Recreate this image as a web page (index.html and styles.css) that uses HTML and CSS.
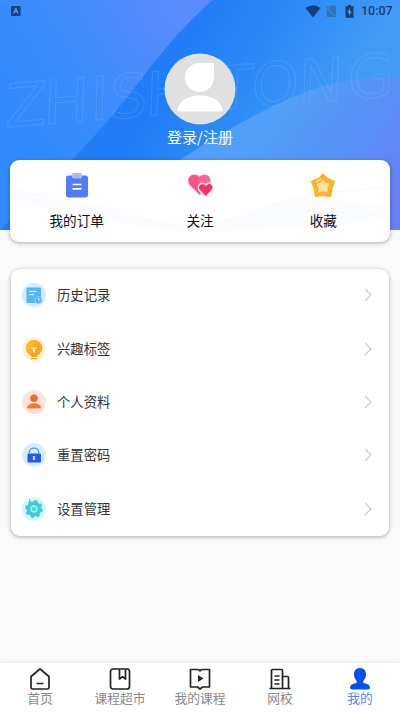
FILE: index.html
```html
<!DOCTYPE html>
<html lang="zh-CN">
<head>
<meta charset="utf-8">
<title>我的</title>
<link rel="stylesheet" href="styles.css">
</head>
<body>
<div class="app">
  <header class="hero">
    <svg class="hero-bg" viewBox="0 0 400 230" aria-hidden="true">
      <defs>
        <linearGradient id="base" gradientUnits="userSpaceOnUse" x1="190" y1="40" x2="330" y2="120">
          <stop offset="0" stop-color="#207df7"/><stop offset=".45" stop-color="#2c8bf7"/><stop offset="1" stop-color="#409bf5"/>
        </linearGradient>
        <linearGradient id="left" gradientUnits="userSpaceOnUse" x1="20" y1="110" x2="180" y2="10">
          <stop offset="0" stop-color="#318bfe"/><stop offset=".45" stop-color="#3f8bfd"/><stop offset="1" stop-color="#598bfb"/>
        </linearGradient>
        <linearGradient id="right" gradientUnits="userSpaceOnUse" x1="280" y1="105" x2="400" y2="190">
          <stop offset="0" stop-color="#519ff8"/><stop offset=".5" stop-color="#5592f7"/><stop offset="1" stop-color="#6a7ff5"/>
        </linearGradient>
      </defs>
      <rect width="400" height="230" fill="url(#base)"/>
      <path d="M0 0H213Q181 27 145 74Q112 119 70 162Q38 195 0 230Z" fill="url(#left)"/>
      <path d="M160 173Q250 112 311 90Q350 76 400 76V230H100Z" fill="url(#right)"/>
      <text class="hero-word" transform="translate(0 128) skewY(-4.7) skewX(-2)" x="5 43 90 109 145 191 215 251 298 347">ZHISHITONG</text>
    </svg>
    <div class="status">
      <svg width="12" height="12" viewBox="0 0 12 12"><rect x="1" y="1" width="9.6" height="10" rx="1" fill="#164480"/><path d="M3.7 8.5 5.8 3.2 7.9 8.5M4.5 6.8H7.1" fill="none" stroke="#79aee6"/></svg>
      <div class="status-right">
        <svg width="16" height="13" viewBox="0 0 16 13"><path d="M.5 3.1Q8-2.400 15.500 3.100L8 12.500Z" fill="#153f73"/></svg>
        <svg width="11" height="13" viewBox="0 0 11 13"><path d="M4 .5H10V11L2 3ZM1 4 9 12H1Z" fill="#3470b4"/><path d="M0 1 10 12" stroke="#3470b4"/></svg>
        <svg width="9" height="13" viewBox="0 0 9 13"><path d="M3 0H6V1.3H8.5V12.7H.5V1.3H3Z" fill="#153f73"/><path d="M5 3 2.5 7.5H4.2V11L6.7 6.4H5Z" fill="#5eaaf0"/></svg>
        <span class="clock">10:07</span>
      </div>
    </div>
    <div class="profile">
      <svg class="avatar" viewBox="0 0 72 72"><circle cx="36" cy="36" r="35.5" fill="#e0e0e0"/><path d="M36 10H50V24A14.500 14.500 0 1 1 36 10Z" fill="#fff"/><path d="M13.500 58.500C13.500 48 24 42.500 36 42.500S58.500 48 58.500 58.500Z" fill="#fff"/></svg>
      <a class="login">登录/注册</a>
    </div>
  </header>

  <section class="card quick">
    <svg class="waves" viewBox="0 0 380 82" preserveAspectRatio="none"><path d="M0 30Q60 40 110 53T190 66Q224 61 247 49Q305 32 380 48V58Q300 70 170 72Q95 62 0 40Z" fill="#fafcff"/><path d="M0 30Q80 42 115 54T190 58M160 66Q215 66 247 50Q300 30 380 28M280 50Q330 50 380 58" fill="none" stroke="#f4f8fd"/></svg>
    <a class="quick-item">
      <svg width="30" height="30" viewBox="0 0 30 30"><rect x="4" y="5.500" width="22" height="22" rx="2.500" fill="#527bf7"/><rect x="10" y="3" width="10" height="5.500" rx="1.800" fill="#a6b9fc"/><path d="M10.500 14.500H19.500M10.500 18.800H19.500" stroke="#fff" stroke-width="1.700"/></svg>
      <span>我的订单</span>
    </a>
    <a class="quick-item">
      <svg width="30" height="30" viewBox="0 0 30 30"><defs><linearGradient id="heart" x2="1"><stop stop-color="#ff4c7d"/><stop offset="1" stop-color="#ff6b9c"/></linearGradient></defs><path d="M14.500 25 5 15.300C-.5 8.500 8 .5 14.500 6.800C21 .5 29 8.500 24 15.300Z" fill="url(#heart)"/><path d="M20.800 27 14.500 20.500C11 15.500 17 10.800 20.800 15C24.500 10.800 31 15.500 27 20.500Z" fill="#fb3468" stroke="#fff" stroke-width="1.300"/></svg>
      <span>关注</span>
    </a>
    <a class="quick-item">
      <svg width="30" height="30" viewBox="0 0 30 30"><path d="M15 5 18.800 9.200 25.500 12 23 18 22 25.500 15 24.500 8 25.500 7 18 4.500 12 11.200 9.200Z" fill="#fbb32d" stroke="#fbb32d" stroke-width="3" stroke-linejoin="round"/><path d="M15 10.500 17.200 13.500 20.700 14.500 18.800 17.700 18.700 21.500 15 20.500 11.300 21.500 11.200 17.700 9.300 14.500 12.800 13.500Z" fill="#ffe2a0" stroke="#ffe2a0" stroke-width="1.500" stroke-linejoin="round"/><path d="M8 12 13 9" stroke="#ffdb82" stroke-width="1.500"/></svg>
      <span>收藏</span>
    </a>
  </section>

  <nav class="card menu">
    <a class="row">
      <svg class="row-icon" viewBox="0 0 24 24"><circle cx="12" cy="12" r="12" fill="#d2edff"/><rect x="4.500" y="4.500" width="14.500" height="15.500" rx="1" fill="#53b6fa"/><path d="M7 8.300H15M7 11.500H12" stroke="#c9edff" stroke-width="1.300"/><circle cx="16.500" cy="17" r="3.500" fill="#55aff2" stroke="#8fcffb"/><path d="M16.500 15V17H18.200" fill="none" stroke="#e8f8ff"/></svg>
      <span class="label">历史记录</span><svg class="arrow" viewBox="0 0 8 14"><path d="M1 1 7 7 1 13"/></svg>
    </a>
    <a class="row">
      <svg class="row-icon" viewBox="0 0 24 24"><defs><linearGradient id="bulb" x2="1" y2="1"><stop stop-color="#ffc533"/><stop offset="1" stop-color="#ff9413"/></linearGradient></defs><circle cx="12" cy="12" r="12" fill="#fff3d9"/><circle cx="12" cy="11" r="8.300" fill="url(#bulb)"/><path d="M8.500 17H15.500L15 20H9ZM8.500 21H15.500V22.300H8.500Z" fill="#f9a125"/><path d="M9.300 10.800 12 11.500 14.700 10.800M12 11V15.500" fill="none" stroke="#fff2c9" stroke-width="1.700"/></svg>
      <span class="label">兴趣标签</span><svg class="arrow" viewBox="0 0 8 14"><path d="M1 1 7 7 1 13"/></svg>
    </a>
    <a class="row">
      <svg class="row-icon" viewBox="0 0 24 24"><circle cx="12" cy="12" r="12" fill="#ffe4dc"/><circle cx="12" cy="8.300" r="3.800" fill="#f26930"/><path d="M5 18.500C5 11.500 19 11.500 19 18.500Z" fill="#fa7430"/></svg>
      <span class="label">个人资料</span><svg class="arrow" viewBox="0 0 8 14"><path d="M1 1 7 7 1 13"/></svg>
    </a>
    <a class="row">
      <svg class="row-icon" viewBox="0 0 24 24"><circle cx="12" cy="12" r="12" fill="#d9edff"/><path d="M7.300 10V9A4.700 3.800 0 0 1 16.700 9V10" fill="none" stroke="#4a91ef" stroke-width="1.300"/><rect x="5.500" y="10.500" width="13.500" height="9" rx="1" fill="#2458ee"/><path d="M12 13V17" stroke="#bdddff" stroke-width="2.200"/></svg>
      <span class="label">重置密码</span><svg class="arrow" viewBox="0 0 8 14"><path d="M1 1 7 7 1 13"/></svg>
    </a>
    <a class="row">
      <svg class="row-icon" viewBox="0 0 24 24"><circle cx="12" cy="12" r="12" fill="#d4f7fa"/><circle cx="12" cy="12" r="7.600" fill="#42c9d2"/><circle cx="12" cy="12" r="7.900" fill="none" stroke="#42c9d2" stroke-width="2" stroke-dasharray="3.200 3.005"/><circle cx="12" cy="12" r="3" fill="#55d6dc" stroke="#a7f1f0" stroke-width="1.300"/><path d="M7.500 2V5" stroke="#4fc8d0"/></svg>
      <span class="label">设置管理</span><svg class="arrow" viewBox="0 0 8 14"><path d="M1 1 7 7 1 13"/></svg>
    </a>
  </nav>

  <footer class="tabs">
    <a class="tab"><svg viewBox="0 0 24 24"><path d="M3 9.500 12 2 21 9.500V20.500Q21 22 19.500 22H4.500Q3 22 3 20.500ZM8.500 16.500H15.500"/></svg><span>首页</span></a>
    <a class="tab"><svg viewBox="0 0 24 24"><rect x="2.500" y="2" width="19" height="20" rx="2.500"/><path d="M11.500 2V12L14.500 9.700 17.500 12V2"/></svg><span>课程超市</span></a>
    <a class="tab"><svg viewBox="0 0 24 24"><path d="M2.500 2.500H9Q12 2.500 12 4Q12 2.500 15 2.500H21.500V20H14.500L12 22 9.500 20H2.500Z"/><path class="solid" d="M10 8 15.500 11.500 10 15Z"/></svg><span>我的课程</span></a>
    <a class="tab"><svg viewBox="0 0 24 24"><path d="M3.500 21.500V3.500Q3.500 2.500 4.500 2.500H13.500Q14.500 2.500 14.500 3.500V21.500M1.500 21.500H22.500M14.500 9.500H19.500Q20.500 9.500 20.500 10.500V21.500M6.500 9H11.500M6.500 13H11.500M6.500 17H11.500"/></svg><span>网校</span></a>
    <a class="tab active"><svg viewBox="0 0 24 24"><path class="solid" d="M12 1C7.800 1 5.800 4 6 8C6.200 11 7.500 12.500 8.700 14C9.300 16 7.500 16.500 5 17C2.500 17.800 2 19.500 2 20.500Q2 22.500 4 22.500H20Q22 22.500 22 20.500C22 19.500 21.500 17.800 19 17C16.500 16.500 14.700 16 15.300 14C16.500 12.500 17.800 11 18 8C18.200 4 16.200 1 12 1Z"/></svg><span>我的</span></a>
  </footer>
</div>
</body>
</html>
```
FILE: styles.css
```css
* { box-sizing: border-box; }
body { margin: 0; background: #fafafa; font-family: "Noto Sans CJK SC", sans-serif; }
svg { display: block; }
.app { width: 400px; height: 712px; display: flex; flex-direction: column; overflow: hidden; }
.hero { position: relative; height: 230px; flex: none; }
.hero-bg { position: absolute; inset: 0; width: 400px; height: 230px; }
.hero-word { font: 62px "DejaVu Sans", sans-serif; font-size: 60px; fill: none; stroke: #8ac6ff; stroke-opacity: .24; stroke-width: 1; }
.status { position: relative; height: 22px; padding: 0 7px 0 10px; display: flex; align-items: center; justify-content: space-between; }
.status-right { display: flex; align-items: center; }
.status-right svg:nth-child(1) { margin-right: 5px; }
.status-right svg:nth-child(2) { margin-right: 8px; }
.clock { margin-left: 7px; width: 32px; font: 500 12.500px/22px Roboto, sans-serif; color: #153f73; white-space: nowrap; }
.profile { position: relative; display: flex; flex-direction: column; align-items: center; padding-top: 31px; }
.avatar { width: 72px; height: 72px; }
.login { font-size: 15px; line-height: 24px; color: #fff; }
.card { position: relative; background: #fff; border-radius: 9px; box-shadow: 0 1px 4px rgba(0, 0, 0, .32); flex: none; }
.quick { width: 380px; height: 82px; margin: -70px 10px 0; padding: 0 5px; display: grid; grid-template-columns: repeat(3, 1fr); }
.waves { position: absolute; inset: 0; width: 380px; height: 82px; border-radius: 9px; }
.quick-item { position: relative; display: flex; flex-direction: column; align-items: center; padding-top: 10px; }
.quick-item span { margin-top: 9px; font-size: 13.600px; line-height: 22px; color: #111; }
.menu { width: 378px; height: 267px; margin: 27px 11px 0; }
.row { height: 53.400px; padding: 0 17px 1px 11px; display: flex; align-items: center; }
.row-icon { width: 24px; height: 24px; }
.label { flex: 1; margin-left: 11px; font-size: 13.330px; line-height: 24px; color: #333; }
.arrow { width: 8px; height: 14px; fill: none; stroke: #ccc; stroke-width: 1.100; }
.tabs { margin-top: auto; height: 50px; background: #fff; border-top: 1px solid #eee; box-shadow: 0 -1px 2px rgba(0, 0, 0, .04); display: grid; grid-template-columns: repeat(5, 1fr); flex: none; }
.tab { display: flex; flex-direction: column; align-items: center; padding-top: 4px; font-size: 12.800px; line-height: 17px; color: #888; }
.tab svg { width: 24px; height: 24px; flex: none; fill: none; stroke: #222; stroke-width: 1.700; stroke-linejoin: round; }
.tab span { margin-top: -2px; }
.tab .solid { fill: #222; stroke: none; }
.tab.active { color: #5989ef; }
.tab.active .solid { fill: #0750ed; }
```
